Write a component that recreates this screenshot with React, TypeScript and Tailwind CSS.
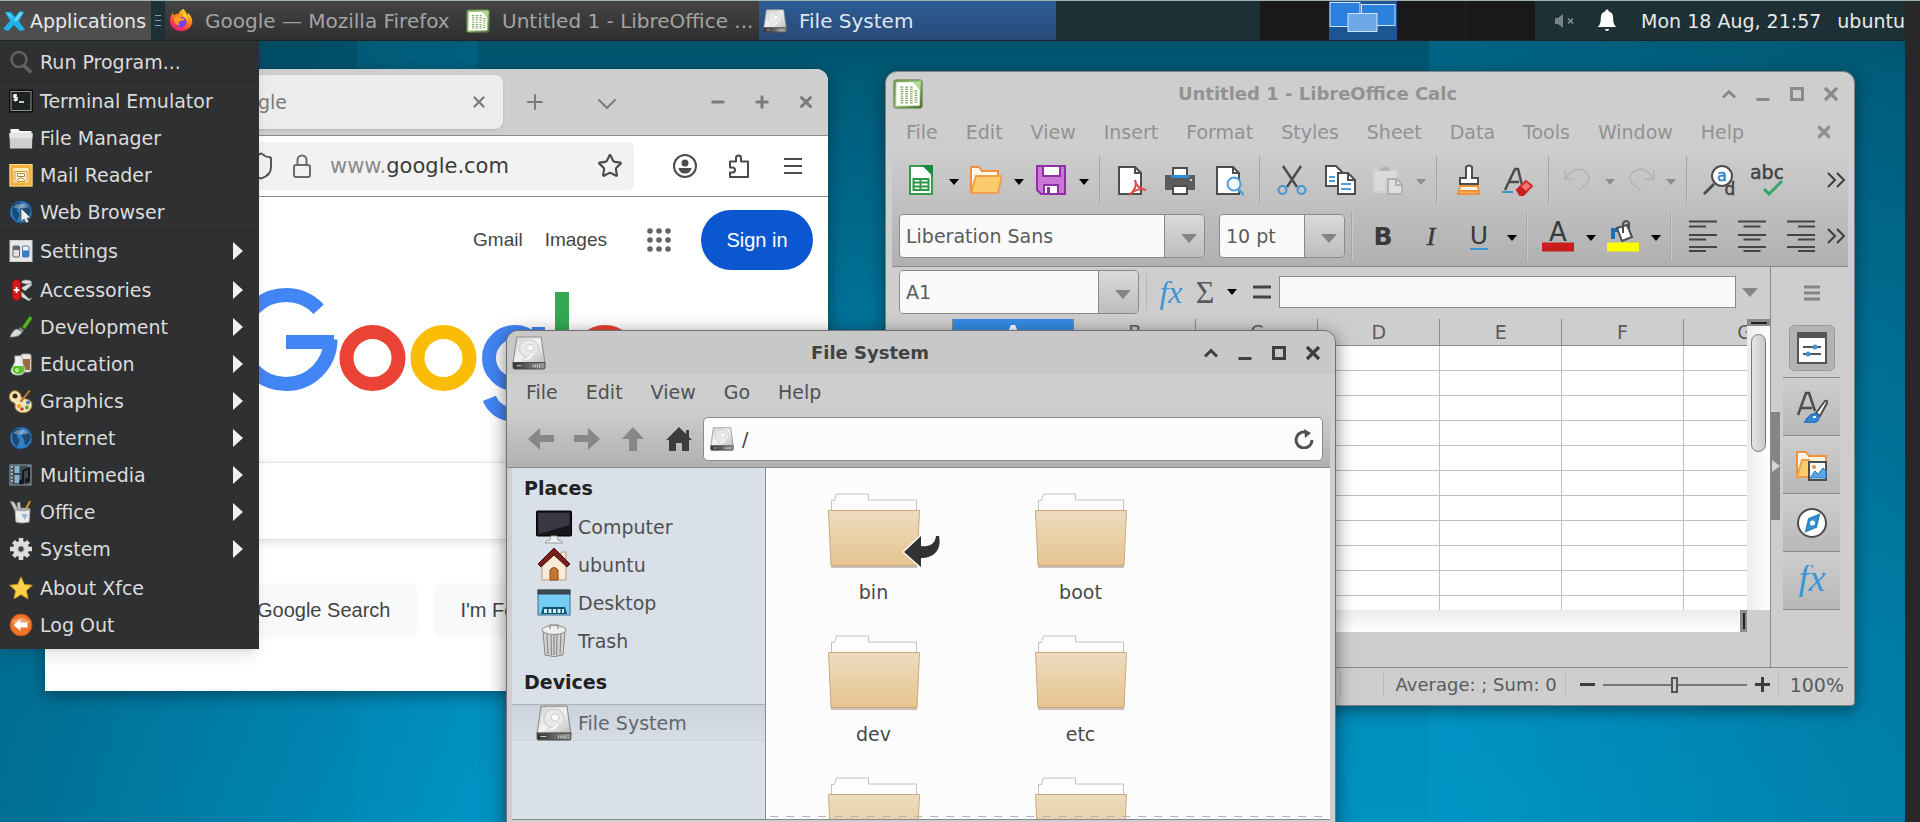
import type { ReactNode } from "react";
import { ChevronDown, Lock, Minus, Plus, Shield, Star, X } from "lucide-react";

/* ---------- small shared icons ---------- */

function DriveIcon({ className }: { className: string }) {
  return (
    <svg className={className} viewBox="0 0 32 32" aria-hidden="true">
      <defs>
        <linearGradient id="driveTop" x1="0" y1="0" x2="1" y2="1">
          <stop offset="0" stopColor="#cfcfcf" />
          <stop offset="0.5" stopColor="#f2f2f2" />
          <stop offset="1" stopColor="#bdbdbd" />
        </linearGradient>
        <linearGradient id="driveFront" x1="0" y1="0" x2="1" y2="0">
          <stop offset="0" stopColor="#2f2f2f" />
          <stop offset="1" stopColor="#9a9a9a" />
        </linearGradient>
      </defs>
      <path d="M4.500 1h23l3.500 24H1z" fill="url(#driveTop)" stroke="#8f8f8f" />
      <path d="M1 25h30v4.500q0 1.500-1.500 1.500h-27Q1 31 1 29.500z" fill="url(#driveFront)" stroke="#4d4d4d" />
      <ellipse cx="16" cy="12" rx="9" ry="8.500" fill="#e9e9e9" stroke="#cfcfcf" />
      <ellipse cx="17" cy="11" rx="3.500" ry="3" fill="#fafafa" stroke="#d0d0d0" />
      <path d="M10 21q6 0 9-6l2 1q-2 7-9 7z" fill="#f8f8f8" stroke="#cdcdcd" strokeWidth="0.600" />
      <path d="M4 28h5M20 27v2.500M22 27v2.500M24 27v2.500M26 27v2.500" stroke="#c9d4c4" strokeWidth="0.900" />
    </svg>
  );
}

function CalcIcon({ className }: { className: string }) {
  return (
    <svg className={className} viewBox="0 0 32 32" aria-hidden="true">
      <defs>
        <linearGradient id="calcFrame" x1="0" y1="0" x2="1" y2="1">
          <stop offset="0" stopColor="#7ea35c" />
          <stop offset="0.500" stopColor="#a9cf86" />
          <stop offset="1" stopColor="#43662a" />
        </linearGradient>
      </defs>
      <rect x="1" y="1" width="30" height="30" rx="2" fill="url(#calcFrame)" stroke="#567a3a" />
      <path d="M3.500 3.500h18l7 8v17h-25z" fill="#fff" />
      <path d="M21.500 3.500l7 8v-8z" fill="#b9da9b" />
      <path d="M9.500 8v18M14.500 8v18M19.500 8v18M24.500 12v14" stroke="#86ad66" strokeWidth="3" strokeDasharray="1.200 1.200" />
    </svg>
  );
}

function FirefoxIcon() {
  return (
    <svg className="size-6" viewBox="1 1 30 31" aria-hidden="true">
      <defs>
        <linearGradient id="fox" x1="0.800" y1="0" x2="0.200" y2="1">
          <stop offset="0" stopColor="#ffe226" />
          <stop offset="0.400" stopColor="#ff8a1a" />
          <stop offset="0.750" stopColor="#ff3647" />
          <stop offset="1" stopColor="#e31587" />
        </linearGradient>
      </defs>
      <path d="M19 1c3 3 4 5 5 7 1 0 1-1 1-2 4 4 6 8 5.500 13A14.500 13 0 0 1 2 19C1.500 13 3 9 6 5c0 2 0 3 1 4 2-2 4-2 6-2 1-3 3-5 6-6z" fill="url(#fox)" />
      <circle cx="16" cy="18" r="7" fill="#7a3ff2" />
      <path d="M7 12c4-3 7-1 10 1l4 1c-2 3-5 2-7 3s-1 4 1 5c-5 1-9-4-8-10z" fill="#ff9a1c" />
      <path d="M19 3c1 5 6 7 6 14-1-4-3-6-6-7z" fill="#ffdf3c" />
    </svg>
  );
}

function XfceIcon() {
  return (
    <svg className="size-6 shrink-0" viewBox="0 0 24 24" aria-hidden="true">
      <path d="M3 3l6 0 4 5 5-6 4 1-5 9 6 9-5 1-6-6-6 6-5-2 7-8z" fill="#1fb2ea" />
      <path d="M4 4l4 1 4 6 6-8 3 1-7 9" fill="#6ed4f7" />
    </svg>
  );
}

function Caret({ dim }: { dim?: boolean }) {
  return (
    <svg className={dim ? "h-[6px] w-[10px] text-[#8d8d8d]" : "h-[6px] w-[10px] text-black"} viewBox="0 0 10 6" aria-hidden="true">
      <path d="M0 0h10L5 6z" fill="currentColor" />
    </svg>
  );
}

function ComboCaret() {
  return (
    <svg className="h-[9px] w-4" viewBox="0 0 16 9" aria-hidden="true">
      <path d="M0 0h16L8 9z" fill="#858585" />
    </svg>
  );
}

/* shade, minimise, maximise, close */
function WindowButtons({ active }: { active?: boolean }) {
  return (
    <div className={active ? "flex text-[#3f3f3f]" : "flex text-[#8a8a8a]"}>
      <button type="button" aria-label="Shade" className="grid h-8 w-[34px] place-items-center">
        <svg className="size-4" viewBox="0 0 16 16" fill="none" stroke="currentColor" strokeWidth="3"><path d="M2 11.500l6-6 6 6" /></svg>
      </button>
      <button type="button" aria-label="Minimise" className="grid h-8 w-[34px] place-items-center">
        <svg className="size-4" viewBox="0 0 16 16" fill="none" stroke="currentColor" strokeWidth="3"><path d="M1.500 13.500h13" /></svg>
      </button>
      <button type="button" aria-label="Maximise" className="grid h-8 w-[34px] place-items-center">
        <svg className="size-4" viewBox="0 0 16 16" fill="none" stroke="currentColor" strokeWidth="3"><path d="M2.500 2.500h11v11h-11z" /></svg>
      </button>
      <button type="button" aria-label="Close" className="grid h-8 w-[34px] place-items-center">
        <svg className="size-4" viewBox="0 0 16 16" fill="none" stroke="currentColor" strokeWidth="3.200"><path d="M2 2l12 12M14 2L2 14" /></svg>
      </button>
    </div>
  );
}

/* ---------- applications menu ---------- */

const globe = (
  <>
    <circle cx="12" cy="12" r="11" fill="#2f7fc4" stroke="#1c4f86" />
    <path d="M4 5c4-4 8-3 9-1-2 1-1 3-4 4-2 1-1 4 1 5 1 2-1 6-2 8-4-3-6-9-4-16z" fill="#1d4a75" />
    <path d="M15 6c3-2 6 1 7 5-1 5-4 8-6 8-1-3 0-5-2-7s-1-4 1-6z" fill="#1d4a75" />
    <path d="M4 7q8-7 16 0-8 3-16 0z" fill="#fff" opacity="0.350" />
  </>
);

const icons: Record<string, ReactNode> = {
  run: (
    <g fill="none" stroke="#606264">
      <circle cx="10" cy="9.500" r="7.500" strokeWidth="2.500" />
      <path d="M15 15.500l7 7" strokeWidth="3.500" />
    </g>
  ),
  terminal: (
    <>
      <rect x="0.500" y="1" width="23" height="22" fill="#161819" stroke="#0a0a0a" />
      <rect x="2" y="2.500" width="20" height="19" fill="#1f2223" stroke="#8b8d8f" />
      <path d="M8 6H5v2.500h3V11H4.500M6.500 5v7.500M10 13h5" fill="none" stroke="#fff" strokeWidth="1.400" />
    </>
  ),
  folder: (
    <>
      <path d="M1.500 3h8l1.500 2h11.500v16h-21z" fill="#f5f5f5" />
      <path d="M0.500 7h23l-0.500 15.500H1z" fill="#cfcfcf" />
      <path d="M0.500 7h23v5H0.500z" fill="#e5e5e5" />
    </>
  ),
  mail: (
    <>
      <rect x="2.500" y="3" width="19" height="18.500" fill="#fbe9b8" stroke="#f0b23c" strokeWidth="4" />
      <rect x="1" y="1.500" width="22" height="21.500" fill="none" stroke="#fbd88a" />
      <path d="M6 8.500h12v8l-2 2H8l-2-2z" fill="#fff6dc" stroke="#c9952f" />
      <path d="M8.500 10.500h7v3h-7zM8 17l4-2.500 4 2.500" fill="#fffbe9" stroke="#a88844" />
    </>
  ),
  web: (
    <>
      {globe}
      <path d="M12 8v14l3-3 2 4 3-1-2-4h4z" fill="#eee" stroke="#333" strokeWidth="0.700" />
    </>
  ),
  settings: (
    <>
      <rect x="1" y="1.500" width="22" height="21" fill="#e8e8e8" stroke="#cfcfcf" />
      <rect x="4" y="7" width="6.500" height="11" rx="1" fill="#e0e0e0" stroke="#63676c" />
      <path d="M4 7h6.500v4H4z" fill="#63676c" />
      <rect x="13.500" y="7" width="6.500" height="11" rx="1" fill="#3a7cc8" stroke="#4d7fb8" />
      <path d="M14 7.500h5.500v4H14z" fill="#f2f2f2" />
    </>
  ),
  accessories: (
    <>
      <path d="M13 5c-2-3 5-4 9-2l1 3h-6zM12 10l9-5 2 2-7 6zM12 13l8 8 3-1-3 3-9-5z" fill="#dcdcdc" stroke="#888" strokeWidth="0.600" />
      <rect x="3" y="1.500" width="9" height="21" rx="4.500" fill="#d31a1a" stroke="#7f0d0d" />
      <path d="M7.500 9v6M4.800 12h5.400" stroke="#fff" strokeWidth="1.800" />
    </>
  ),
  development: (
    <>
      <path d="M13 12l7-10c2-1 3 0 3 2l-7 10z" fill="#54b61f" stroke="#2c6d0c" strokeWidth="0.700" />
      <path d="M11 12l4 3-2 3-4-2z" fill="#888" />
      <path d="M1 22c2-4 3-7 7-8l5 3c-2 4-6 5-12 5z" fill="#dadada" stroke="#8c8c8c" strokeWidth="0.700" />
    </>
  ),
  education: (
    <>
      <rect x="12" y="2" width="10" height="18" rx="2" fill="#eee7d8" stroke="#aaa" />
      <rect x="14" y="7" width="7" height="11" fill="#9a6a43" />
      <path d="M6 4h7v6l3 7q0 6-7 6t-7-5l4-8z" fill="#f0f0f0" stroke="#bbb" />
      <path d="M4.500 14h10q3 8-5 8t-5-8z" fill="#59c224" />
      <circle cx="8" cy="18" r="2" fill="#b6f08b" />
    </>
  ),
  graphics: (
    <>
      <path d="M1 5c3-6 10-3 11 2 0 3 4 2 8 4 5 3 3 10-2 12-6 2-12-1-12-6 1-4-2-3-4-5-2-3-2-4-1-7z" fill="#f7e3b5" stroke="#b88737" />
      <circle cx="6" cy="7" r="2.500" fill="#3a2a10" />
      <circle cx="10" cy="17" r="2" fill="#e8a12d" />
      <circle cx="19" cy="13.500" r="2" fill="#3a78c9" />
      <circle cx="13" cy="20" r="1.800" fill="#d8322c" />
      <circle cx="18" cy="18.500" r="1.900" fill="#4bae34" />
      <path d="M20 1l-9 11 1.500 1L21.500 2z" fill="#c98b35" stroke="#7b501a" strokeWidth="0.600" />
    </>
  ),
  internet: globe,
  multimedia: (
    <>
      <rect x="1" y="2" width="21" height="20" fill="#3d4a53" stroke="#8fa2ae" />
      <path d="M3 3v18M20 3v18" stroke="#c3d1da" strokeWidth="1.500" strokeDasharray="2 1.500" />
      <path d="M5.500 3h5v7h-5zM5.500 12h5v8h-5z" fill="#86b3c9" />
      <path d="M14 19V8l6-3v12" fill="none" stroke="#15191c" strokeWidth="2" />
      <circle cx="12.500" cy="19" r="2.500" fill="#15191c" />
      <circle cx="18.500" cy="17.500" r="2.500" fill="#15191c" />
    </>
  ),
  office: (
    <>
      <path d="M1 1l4 1 5 9H6zM8 3l3-1 1 9H9z" fill="#c9c9c9" stroke="#777" strokeWidth="0.600" />
      <path d="M22 1l-2 0-6 11h3z" fill="#d8a343" stroke="#7d5a1e" strokeWidth="0.600" />
      <path d="M6 9h15l-1 13q-7 2-13 0z" fill="#ececec" stroke="#aaa" />
      <ellipse cx="13.500" cy="9.500" rx="7.500" ry="1.800" fill="#a8a8a8" />
      <path d="M12 14h7l-3 6z" fill="#9db9d6" />
    </>
  ),
  system: (
    <>
      <path d="M12 1v22M1 12h22M4.500 4.500l15 15M19.500 4.500l-15 15" stroke="#dcdcdc" strokeWidth="4.500" />
      <circle cx="12" cy="12" r="8" fill="#dcdcdc" />
      <circle cx="12" cy="12" r="3" fill="#3a3c3e" stroke="#aaa" />
    </>
  ),
  about: <path d="M12 1l3.300 7.500 8 .8-6 5.400 1.700 8.100-7-4.200-7 4.200 1.700-8.100-6-5.400 8-.8z" fill="#fbd34a" stroke="#d99b1e" />,
  logout: (
    <>
      <circle cx="12" cy="12" r="11" fill="#f0742c" stroke="#b64a12" />
      <path d="M3 9q9-8 18 0-9 5-18 0z" fill="#fff" opacity="0.300" />
      <path d="M4.500 12l7-6v3.500h7v5h-7V18z" fill="#fff" />
    </>
  ),
};

const menuGroups = [
  [{ label: "Run Program...", icon: "run" }],
  [
    { label: "Terminal Emulator", icon: "terminal" },
    { label: "File Manager", icon: "folder" },
    { label: "Mail Reader", icon: "mail" },
    { label: "Web Browser", icon: "web" },
  ],
  [{ label: "Settings", icon: "settings", sub: true }],
  [
    { label: "Accessories", icon: "accessories", sub: true },
    { label: "Development", icon: "development", sub: true },
    { label: "Education", icon: "education", sub: true },
    { label: "Graphics", icon: "graphics", sub: true },
    { label: "Internet", icon: "internet", sub: true },
    { label: "Multimedia", icon: "multimedia", sub: true },
    { label: "Office", icon: "office", sub: true },
    { label: "System", icon: "system", sub: true },
  ],
  [
    { label: "About Xfce", icon: "about" },
    { label: "Log Out", icon: "logout" },
  ],
] as { label: string; icon: string; sub?: boolean }[][];

function AppMenu() {
  return (
    <nav className="absolute left-0 top-[41px] z-40 w-[259px] bg-[#2e3032] pt-[2px] pb-[6px] text-[#dcdcdc] shadow-lg">
      {menuGroups.map((group, i) => (
        <div key={i} className={i > 0 ? "border-t-2 border-[#2a2c2e]" : ""}>
          {group.map((item) => (
            <button key={item.label} type="button" className="flex h-[37px] w-full items-center gap-[7px] pl-[9px] pr-4 text-left">
              <svg className="size-6 shrink-0" viewBox="0 0 24 24" aria-hidden="true">{icons[item.icon]}</svg>
              <span className="flex-1 whitespace-nowrap">{item.label}</span>
              {item.sub && (
                <svg className="h-[18px] w-[10px]" viewBox="0 0 10 18" aria-hidden="true"><path d="M0 0l10 9-10 9z" fill="#f0f0f0" /></svg>
              )}
            </button>
          ))}
        </div>
      ))}
    </nav>
  );
}

/* ---------- top panel ---------- */

function TaskButton({ icon, title, active }: { icon: ReactNode; title: string; active?: boolean }) {
  return (
    <button
      type="button"
      className={
        active
          ? "flex w-[297px] items-center gap-3 bg-linear-to-b from-[#2c5c96] to-[#294a78] px-1 text-left text-xl text-[#dfe6ee]"
          : "flex w-[297px] items-center gap-3 bg-linear-to-b from-[#444444] to-[#303030] px-1 text-left text-xl text-[#a3a3a3]"
      }
    >
      <span className="shrink-0">{icon}</span>
      <span className="whitespace-nowrap">{title}</span>
    </button>
  );
}

function Panel() {
  return (
    <header className="relative z-50 flex h-[41px] border-t border-b border-t-[#9fb3b6] border-b-[#1b2527] bg-[#1d3036] text-[#e8e8e8]">
      <button type="button" className="flex w-[151px] items-center gap-1 bg-linear-to-b from-[#454545] to-[#505050] pl-[2px] whitespace-nowrap">
        <XfceIcon />
        Applications
      </button>
      <div className="flex w-[14px] flex-col items-center justify-center gap-1">
        <span className="h-px w-[6px] bg-[#8ba0a5]" />
        <span className="h-px w-[6px] bg-[#8ba0a5]" />
        <span className="h-px w-[6px] bg-[#8ba0a5]" />
      </div>
      <TaskButton icon={<FirefoxIcon />} title="Google — Mozilla Firefox" />
      <TaskButton icon={<CalcIcon className="size-6" />} title="Untitled 1 - LibreOffice ..." />
      <TaskButton icon={<DriveIcon className="size-6" />} title="File System" active />
      <div className="ml-auto flex w-[275px] bg-[#191919]">
        <span className="flex-1" />
        <svg className="h-full w-[68px] bg-[#1c5592]" viewBox="0 0 68 39" aria-hidden="true">
          <g stroke="#cfe3f8">
            <rect x="1" y="1.500" width="30" height="24" fill="#2b80dd" />
            <rect x="32.500" y="3.500" width="33.500" height="21" fill="#2b80dd" />
            <rect x="19" y="12.500" width="29" height="18" fill="#6ca7e6" />
          </g>
        </svg>
        <span className="flex-1" />
        <span className="flex-1 border-l border-[#222]" />
      </div>
      <div className="flex items-center pl-5">
        <svg className="h-4 w-5" viewBox="0 0 20 16" aria-hidden="true">
          <path d="M0 5h3l5-4v14l-5-4H0z" fill="#75848a" />
          <path d="M13 5.500l5 5M18 5.500l-5 5" stroke="#8b979b" strokeWidth="1.500" />
        </svg>
        <svg className="ml-[22px] h-[23px] w-5" viewBox="0 0 20 23" aria-hidden="true">
          <path d="M10 0.500c1 0 1.600.7 1.600 1.700 3 .8 4.600 3.200 4.600 6.500 0 5 .8 7.300 3.300 9.300H.5c2.500-2 3.300-4.300 3.300-9.300 0-3.300 1.600-5.700 4.600-6.500C8.400 1.200 9 .5 10 .5zM8 20h4q0 2-2 2t-2-2z" fill="#fff" />
        </svg>
        <time className="ml-6 whitespace-nowrap">Mon 18 Aug, 21:57</time>
        <span className="ml-4">ubuntu</span>
      </div>
    </header>
  );
}

/* ---------- firefox ---------- */

function GoogleLogo() {
  // arcs are dashed circles, bars are plain rects
  return (
    <svg className="block h-[150px] w-[432px] shrink-0" viewBox="0 0 432 150" role="img" aria-label="Google" fill="none">
      <circle cx="56" cy="58.500" r="44.500" stroke="#4285f4" strokeWidth="14" strokeDasharray="246 34" />
      <rect x="62" y="46" width="54" height="8" fill="#fff" />
      <rect x="56" y="54" width="48" height="14" fill="#4285f4" />
      <circle cx="142.500" cy="77" r="26" stroke="#ea4335" strokeWidth="14" />
      <circle cx="213.500" cy="77" r="26" stroke="#fbbc05" strokeWidth="14" />
      <circle cx="285" cy="77" r="26" stroke="#4285f4" strokeWidth="14" />
      <rect x="302" y="46" width="13" height="64" fill="#4285f4" />
      <circle cx="283" cy="108" r="25.500" stroke="#4285f4" strokeWidth="14" strokeDasharray="70 91" />
      <rect x="325" y="11" width="14" height="97" fill="#34a853" />
      <circle cx="375" cy="77" r="26" stroke="#ea4335" strokeWidth="14" />
    </svg>
  );
}

function FirefoxWindow() {
  return (
    <section className="absolute left-[45px] top-[69px] z-10 flex h-[622px] w-[783px] flex-col overflow-hidden rounded-t-xl bg-white shadow-[0_4px_16px_rgba(0,0,0,0.4)]">
      <div className="flex h-[67px] shrink-0 items-center border-b border-[#8b8b8b] bg-[#cecece] text-[#7b7b7b]">
        <div className="ml-[123px] flex h-[54px] w-[335px] items-center justify-between rounded-lg bg-[#ececec] pl-[52px] pr-3 shadow-sm">
          <span>Google</span>
          <button type="button" aria-label="Close tab" className="grid size-6 place-items-center"><X className="size-[18px]" strokeWidth={3} /></button>
        </div>
        <button type="button" aria-label="New tab" className="ml-5 grid size-6 place-items-center"><Plus className="size-6" strokeWidth={2} /></button>
        <button type="button" aria-label="List tabs" className="ml-11 grid size-7 place-items-center"><ChevronDown className="size-8 shrink-0" strokeWidth={1.5} /></button>
        <div className="ml-auto flex">
          <button type="button" aria-label="Minimise" className="grid w-11 place-items-center"><Minus className="size-[18px]" strokeWidth={4} /></button>
          <button type="button" aria-label="Maximise" className="grid w-11 place-items-center"><Plus className="size-[18px]" strokeWidth={4} /></button>
          <button type="button" aria-label="Close" className="grid w-11 place-items-center"><X className="size-[18px]" strokeWidth={4} /></button>
        </div>
      </div>
      <div className="flex h-[61px] shrink-0 items-center border-b border-[#8b8b8b] text-[#4b4b4b]">
        <div className="ml-[185px] flex h-12 w-[404px] items-center rounded-md bg-[#f2f2f2] pl-4 pr-[11px]">
          <Shield className="size-[30px] shrink-0" strokeWidth={1.5} />
          <svg className="ml-4 h-6 w-5 shrink-0 text-[#6b6b6b]" viewBox="0 0 20 24" fill="none" stroke="currentColor" strokeWidth="2" aria-hidden="true">
            <rect x="2" y="11" width="16" height="12" rx="2" />
            <path d="M5.500 11V6a4.500 4.500 0 0 1 9 0v5" />
          </svg>
          <span className="ml-[18px] flex-1 text-[21px] text-[#8b8b8b]">www.<span className="text-[#3b3b3b]">google.com</span></span>
          <Star className="size-[26px] shrink-0" strokeWidth={2} />
        </div>
        <div className="ml-6 flex">
          <button type="button" aria-label="Account" className="grid w-[54px] place-items-center">
            <svg className="size-6" viewBox="0 0 24 24" aria-hidden="true">
              <circle cx="12" cy="12" r="11" fill="none" stroke="currentColor" strokeWidth="2" />
              <circle cx="12" cy="9" r="3.500" fill="currentColor" />
              <path d="M5.500 14h13q-1 5.500-6.500 5.500T5.500 14z" fill="currentColor" />
            </svg>
          </button>
          <button type="button" aria-label="Extensions" className="grid w-[54px] place-items-center">
            <svg className="size-6" viewBox="0 0 24 24" fill="none" stroke="currentColor" strokeWidth="2" aria-hidden="true">
              <path d="M3 7.500h6V4a2.500 2.500 0 0 1 5 0v3.500h7V23H3v-4.500h2.500a2.500 2.500 0 0 0 0-5H3z" strokeLinejoin="round" />
            </svg>
          </button>
          <button type="button" aria-label="Menu" className="grid w-[54px] place-items-center">
            <svg className="size-5" viewBox="0 0 20 20" stroke="currentColor" strokeWidth="2" aria-hidden="true"><path d="M1 3h18M1 10h18M1 17h18" /></svg>
          </button>
        </div>
      </div>
      <div className="flex flex-1 flex-col items-center font-['Liberation_Sans',sans-serif] text-[#444]">
        <div className="mt-[13px] flex w-full items-center justify-end pr-[15px]">
          <a href="#gmail">Gmail</a>
          <a href="#images" className="ml-[22px]">Images</a>
          <svg className="ml-10 size-6" viewBox="0 0 24 24" fill="#5f6368" aria-label="Apps">
            {[3, 12, 21].map((y) => [3, 12, 21].map((x) => <circle key={`${x}-${y}`} cx={x} cy={y} r="2.800" />))}
          </svg>
          <a href="#signin" className="ml-[30px] flex h-15 w-28 items-center justify-center rounded-full bg-[#0b57d0] text-xl text-white">Sign in</a>
        </div>
        <div className="mt-[11px] w-full pl-[185px]">
          <GoogleLogo />
        </div>
        <input aria-label="Search" className="mt-[31px] h-[78px] w-[700px] rounded-full border border-[#dfe1e5] shadow-[0_2px_8px_rgba(0,0,0,0.12)] outline-none" />
        <div className="mt-[43px] flex w-full gap-4 pl-[185px] text-xl">
          <button type="button" className="h-[54px] rounded-lg bg-[#f8f9fa] px-[27px]">Google Search</button>
          <button type="button" className="h-[54px] rounded-lg bg-[#f8f9fa] px-[27px]">I'm Feeling Lucky</button>
        </div>
      </div>
    </section>
  );
}

/* ---------- libreoffice calc ---------- */

function Tool({ label, narrow, children }: { label: string; narrow?: boolean; children: ReactNode }) {
  return (
    <button type="button" aria-label={label} className={narrow ? "grid w-11 place-items-center" : "grid w-12 place-items-center"}>
      <svg className="size-8" viewBox="0 0 32 32" fill="none" stroke="#4d4d4d" strokeWidth="2" aria-hidden="true">{children}</svg>
    </button>
  );
}

function Drop({ dim }: { dim?: boolean }) {
  return (
    <button type="button" aria-label="More options" className="grid w-[17px] place-items-center pt-1">
      <Caret dim={dim} />
    </button>
  );
}

function Sep({ tight }: { tight?: boolean }) {
  return (
    <span
      className={
        tight
          ? "mx-[6px] w-[2px] self-stretch border-l border-[#a6a6a6] bg-[#c9c9c9]"
          : "mx-[7px] w-[2px] self-stretch border-l border-[#a6a6a6] bg-[#c9c9c9]"
      }
    />
  );
}

function Overflow() {
  return (
    <button type="button" aria-label="More" className="ml-auto mr-[2px]">
      <svg className="size-5" viewBox="0 0 20 20" fill="none" stroke="#3d3d3d" strokeWidth="2" aria-hidden="true"><path d="M2 3l7 7-7 7M11 3l7 7-7 7" /></svg>
    </button>
  );
}

function AlignTool({ label, d }: { label: string; d: string }) {
  return (
    <button type="button" aria-label={label} className="grid w-[49px] place-items-center">
      <svg className="h-8 w-[28px]" viewBox="0 0 28 32" stroke="#444" strokeWidth="2" aria-hidden="true"><path d={d} /></svg>
    </button>
  );
}

function Combo({ label, value, className }: { label: string; value: string; className: string }) {
  return (
    <div className={className}>
      <input aria-label={label} defaultValue={value} className="h-full w-0 flex-1 bg-[#fafafa] px-[6px] outline-none" />
      <button type="button" aria-label={`${label} list`} className="grid h-full w-10 place-items-center border-l border-[#8a8a8a] bg-linear-to-b from-[#dadada] to-[#bdbdbd] pt-1 pl-2">
        <ComboCaret />
      </button>
    </div>
  );
}

const calcMenus = ["File", "Edit", "View", "Insert", "Format", "Styles", "Sheet", "Data", "Tools", "Window", "Help"];
const columns = ["A", "B", "C", "D", "E", "F", "G"];
const rows = [1, 2, 3, 4, 5, 6, 7, 8, 9, 10, 11];

function CalcToolbar() {
  return (
    <div className="flex h-16 items-center py-2 pl-[5px]">
      <Tool label="New">
        <path d="M5 2h15l7 7v21H5z" fill="#fff" stroke="#3a9a50" />
        <path d="M19 2h8v8z" fill="#1d8a38" stroke="#1d8a38" />
        <path d="M8.500 15h15v11h-15zM8.500 18.500h15M8.500 22.500h15M15.500 15v11" stroke="#2f9648" />
      </Tool>
      <Drop />
      <Tool label="Open">
        <path d="M1 29V3h8l3 4h16v5" fill="#fff7ea" stroke="#ee9040" />
        <path d="M6 12h26l-4 17H1z" fill="#fbcb6c" stroke="#ee9f4c" />
      </Tool>
      <Drop />
      <Tool label="Save">
        <path d="M2 2h28v28H6l-4-4z" fill="#cb77d8" stroke="#8f2fa3" />
        <path d="M8 2h17v10H8zM9 21h14v9H9z" fill="#fff" stroke="#8f2fa3" />
        <path d="M13.500 23v7" stroke="#8f2fa3" strokeWidth="3" />
      </Tool>
      <Drop />
      <Sep />
      <Tool label="Export as PDF">
        <path d="M3 3h16l6 6v21H3z" fill="#fff" />
        <path d="M19 3v6h6" />
        <path d="M13 31c6-4 8-10 6-15 1 6 4 9 11 10-6-2-12 0-17 5z" fill="#fff" stroke="#dd4b4b" />
      </Tool>
      <Tool label="Print">
        <path d="M9 14V4h14v10" fill="#fff" />
        <path d="M1 11h30v15H1z" fill="#5b5b5b" stroke="none" />
        <path d="M7 11h18v3H7z" fill="#2d8fd5" stroke="none" />
        <path d="M9 22h14v8H9z" fill="#fff" />
        <path d="M26 16h2" stroke="#cfcfcf" />
      </Tool>
      <Tool label="Print Preview">
        <path d="M5 3h16l6 6v21H5z" fill="#fff" />
        <path d="M21 3v6h6" />
        <circle cx="22" cy="20" r="6.500" fill="#eef6fc" stroke="#4a9fd8" />
        <path d="M26 25l6 6" stroke="#4a9fd8" strokeWidth="2.500" />
      </Tool>
      <Sep />
      <Tool label="Cut">
        <path d="M7 2l14 21M25 2L11 23" strokeWidth="2.500" />
        <circle cx="6.500" cy="26" r="4" stroke="#4195d1" />
        <circle cx="25.500" cy="26" r="4" stroke="#4195d1" />
      </Tool>
      <Tool label="Copy">
        <path d="M2 2h10l6 6v14H2z" fill="#fff" />
        <path d="M14 9h10l7 7v14H14z" fill="#fff" />
        <path d="M24 9v7h6" />
        <path d="M5 13h6M5 17h6M17 20h10M17 25h10" stroke="#4a9fd8" />
      </Tool>
      <Tool label="Paste">
        <path d="M2 6h23v9H14v13H2z" fill="#dadada" />
        <path d="M2 6h23v9H14v13H2z" fill="#dadada" stroke="#d0d0d0" />
        <path d="M7 7q6-9 12 0z" fill="#b2b2b2" stroke="none" />
        <path d="M16 15h9l5 5v10H16z" fill="#dedede" stroke="#b2b2b2" />
        <path d="M24 15v6h6" stroke="#b2b2b2" />
      </Tool>
      <Drop dim />
      <Sep />
      <Tool label="Clone Formatting">
        <path d="M13 14V3q3-3 6 0v11h6v6H7v-6z" fill="#fff" />
        <path d="M7 22h18l1 8H5z" fill="#fff3df" stroke="#ee9540" />
        <path d="M6 27h20v3H6z" fill="#fbb25c" stroke="#ee9540" />
      </Tool>
      <Tool label="Clear Formatting">
        <path d="M4 26L14 5h3l4 16M8 18h10" strokeWidth="2.500" />
        <path d="M1 28h11" stroke="#3e95d4" />
        <path d="M16 26l9-9 6 5-9 9z" fill="#ee7777" stroke="#d42f2f" />
        <path d="M16 26l3-3 6 5-3 3h-3z" fill="#cc1f1f" stroke="#cc1f1f" />
      </Tool>
      <Sep />
      <Tool label="Undo" narrow>
        <path d="M2 6v9h9M3 14q7-11 17-8 10 6 4 13l-8 7" stroke="#b3b3b3" strokeWidth="1.500" />
      </Tool>
      <Drop dim />
      <Tool label="Redo" narrow>
        <path d="M30 6v9h-9M29 14Q22 3 12 6q-10 6-4 13l8 7" stroke="#b3b3b3" strokeWidth="1.500" />
      </Tool>
      <Drop dim />
      <Sep />
      <Tool label="Find and Replace">
        <path d="M11 20L1 30" strokeWidth="3" />
        <circle cx="19" cy="12" r="10" fill="#fff" />
        <text x="19" y="17" textAnchor="middle" fontSize="16" fill="#2e86c8" stroke="#2e86c8" strokeWidth="0.500">a</text>
        <text x="27" y="31" textAnchor="middle" fontSize="17" fill="#444" stroke="#444" strokeWidth="0.500">d</text>
      </Tool>
      <Tool label="Spelling">
        <text x="16" y="15" textAnchor="middle" fontSize="19" fill="#444" stroke="#444" strokeWidth="0.500">abc</text>
        <path d="M13 25l5 5L31 17" stroke="#34a66a" strokeWidth="3" />
      </Tool>
      <Overflow />
    </div>
  );
}

function FormatToolbar() {
  return (
    <div className="flex h-[55px] items-center border-b border-[#8a8a8a] pb-[6px] pl-[7px]">
      <Combo label="Font name" value="Liberation Sans" className="flex h-[44px] w-[306px] overflow-hidden rounded-[5px] border border-[#8a8a8a]" />
      <Combo label="Font size" value="10 pt" className="ml-[14px] flex h-[44px] w-[126px] overflow-hidden rounded-[5px] border border-[#8a8a8a]" />
      <Sep tight />
      <Tool label="Bold"><text x="16" y="25" textAnchor="middle" fontSize="25" fontWeight="bold" fill="#3a3a3a" stroke="none">B</text></Tool>
      <Tool label="Italic"><text x="16" y="25" textAnchor="middle" fontSize="26" fontStyle="italic" fontFamily="Liberation Serif" fill="#3a3a3a" stroke="#3a3a3a" strokeWidth="0.500">I</text></Tool>
      <Tool label="Underline">
        <text x="16" y="24" textAnchor="middle" fontSize="25" fill="#3a3a3a" stroke="none">U</text>
        <path d="M7 29h18" stroke="#3e95d4" />
      </Tool>
      <Drop />
      <Sep tight />
      <Tool label="Font colour">
        <text x="16" y="21" textAnchor="middle" fontSize="26" fill="#3a3a3a" stroke="none">A</text>
        <path d="M0 27h32" stroke="#c81e1e" strokeWidth="9" />
      </Tool>
      <Drop />
      <Tool label="Highlight colour">
        <path d="M4 19V8h8v4H8v7z" fill="#1f6fb5" stroke="none" />
        <path d="M10 8l10-3 5 12-10 4z" fill="#fff" />
        <path d="M16 13V3q4-4 6 0v7" />
        <path d="M0 27h32" stroke="#fdfd00" strokeWidth="9" />
      </Tool>
      <Drop />
      <Sep tight />
      <AlignTool label="Align left" d="M0 1.500h28M0 6.500h17M0 15h28M0 19.500h17M0 27h28M0 31h17" />
      <AlignTool label="Centre" d="M0 1.500h28M5.500 6.500h17M0 15h28M5.500 19.500h17M0 27h28M5.500 31h17" />
      <AlignTool label="Align right" d="M0 1.500h28M11 6.500h17M0 15h28M11 19.500h17M0 27h28M11 31h17" />
      <Overflow />
    </div>
  );
}

function Sheet() {
  return (
    <div className="flex h-[291px]">
      <div className="w-0 flex-1 overflow-hidden bg-white">
        <table className="w-[914px] table-fixed border-collapse">
          <thead>
            <tr className="h-[26px] bg-[#cecece] text-[#5b5b5b]">
              <th className="w-[60px] border-r border-b border-[#8a8a8a]" />
              {columns.map((c) => (
                <th
                  key={c}
                  className={
                    c === "A"
                      ? "border-r border-b border-[#8a8a8a] bg-[#368be6] p-0 leading-6 font-bold text-white"
                      : "border-r border-b border-[#8a8a8a] p-0 leading-6 font-normal"
                  }
                >
                  {c}
                </th>
              ))}
            </tr>
          </thead>
          <tbody>
            {rows.map((r) => (
              <tr key={r} className="h-[25px]">
                <th className="border-r border-b border-[#b5b5b5] bg-[#cecece] p-0 text-base leading-6 font-normal">{r}</th>
                {columns.map((c) => (
                  <td key={c} className="border-r border-b border-[#c0c0c0] p-0" />
                ))}
              </tr>
            ))}
          </tbody>
        </table>
      </div>
      <div className="flex w-[23px] flex-col bg-linear-to-r from-[#ececec] to-white">
        <span className="grid h-[7px] place-items-center bg-[#8b8b8b]"><span className="h-[2px] w-4 bg-[#222]" /></span>
        <span className="mx-1 mt-2 h-[118px] rounded-full border border-[#777] bg-linear-to-r from-[#e4e4e4] to-[#c9c9c9]" />
      </div>
    </div>
  );
}

function SideTool({ label, children }: { label: string; children: ReactNode }) {
  return (
    <button type="button" aria-label={label} className="grid h-[58px] place-items-center border-b border-[#8a8a8a] bg-linear-to-b from-[#cecece] to-[#b8b8b8]">
      <svg className="size-8" viewBox="0 0 32 32" fill="none" stroke="#4d4d4d" strokeWidth="2" aria-hidden="true">{children}</svg>
    </button>
  );
}

function CalcWindow() {
  return (
    <section className="absolute left-[885px] top-[71px] z-10 w-[970px] rounded-t-xl rounded-b-sm border border-[#7c8486] bg-[#cecece] px-[6px] pb-1 text-[#929292] shadow-[0_4px_16px_rgba(0,0,0,0.45)]">
      <div className="flex h-11 items-center">
        <CalcIcon className="ml-px size-[30px]" />
        <h2 className="flex-1 text-center text-lg font-bold whitespace-nowrap">Untitled 1 - LibreOffice Calc</h2>
        <WindowButtons />
      </div>
      <nav className="flex h-8 items-center gap-7 pl-[14px]">
        {calcMenus.map((m) => <button key={m} type="button">{m}</button>)}
        <button type="button" aria-label="Close document" className="ml-auto mr-[15px]"><X className="size-[18px]" strokeWidth={5} /></button>
      </nav>
      <div className="bg-linear-to-b from-[#cecece] to-[#b0b0b0] text-[#5b5b5b]">
        <CalcToolbar />
        <FormatToolbar />
      </div>
      <div className="flex text-[#5b5b5b]">
        <div className="w-0 flex-1">
          <div className="flex h-[52px] items-center pb-[2px] pl-[7px]">
            <Combo label="Name box" value="A1" className="flex h-[44px] w-[240px] overflow-hidden rounded-[5px] border border-[#8a8a8a]" />
            <span className="ml-[7px] h-9 w-px bg-[#b4b4b4]" />
            <button type="button" aria-label="Function wizard" className="ml-3 w-6 font-['Liberation_Serif',serif] text-[32px] leading-7 text-[#3e95d4] italic">fx</button>
            <button type="button" aria-label="Select function" className="ml-3 w-5 font-['Liberation_Serif',serif] text-[32px] leading-7">Σ</button>
            <button type="button" aria-label="More functions" className="ml-3"><Caret /></button>
            <button type="button" aria-label="Formula" className="ml-4"><svg className="h-[14px] w-[18px]" viewBox="0 0 18 14" aria-hidden="true"><path d="M0 2h18M0 12h18" stroke="#444" strokeWidth="3" /></svg></button>
            <input aria-label="Formula input" className="ml-2 h-8 w-0 flex-1 border border-[#8a8a8a] bg-[#fafafa] px-1 outline-none" />
            <button type="button" aria-label="Expand formula bar" className="mr-3 ml-[6px]"><ComboCaret /></button>
          </div>
          <Sheet />
          <div className="mr-[23px] flex h-[22px] justify-end bg-linear-to-b from-[#ececec] to-white">
            <span className="grid w-[7px] place-items-center bg-[#8b8b8b]"><span className="h-4 w-[2px] bg-[#222]" /></span>
          </div>
          <div className="h-[35px]" />
        </div>
        <div className="flex w-[78px] border-l border-[#8a8a8a]">
          <button type="button" aria-label="Hide sidebar" className="mt-[145px] grid h-[108px] w-[9px] place-items-center bg-[#858585]">
            <svg className="h-3 w-2" viewBox="0 0 8 12" aria-hidden="true"><path d="M0 0l8 6-8 6z" fill="#d4d4d4" /></svg>
          </button>
          <div className="ml-[3px] flex w-[57px] flex-col">
            <button type="button" aria-label="Sidebar settings" className="grid h-[51px] place-items-center">
              <svg className="size-4" viewBox="0 0 16 16" stroke="#858585" strokeWidth="3" aria-hidden="true"><path d="M0 2h16M0 8h16M0 14h16" /></svg>
            </button>
            <button type="button" aria-label="Properties" className="grid h-[60px] place-items-center border-b border-[#8a8a8a]">
              <span className="grid size-[46px] place-items-center rounded-md border border-[#999] bg-[#b3b3b3]">
                <svg className="size-8" viewBox="0 0 32 32" fill="none" stroke="#555" strokeWidth="2" aria-hidden="true">
                  <path d="M2 1h28v30H2z" fill="#fff" />
                  <path d="M2 3.500h28" strokeWidth="5" />
                  <path d="M7 15h18M7 22h18" />
                  <circle cx="19" cy="15" r="2.500" fill="#3e95d4" stroke="none" />
                  <circle cx="12" cy="22" r="2.500" fill="#3e95d4" stroke="none" />
                </svg>
              </span>
            </button>
            <SideTool label="Styles">
              <path d="M2 24L10 2h3l6 18M5 17h11" strokeWidth="2.500" />
              <path d="M20 22L29 10q3-1 2 2l-7 13z" fill="#fff" />
              <path d="M9 31q5-9 11-8 5 3 1 7-5 3-12 1z" fill="#3a8bd6" stroke="#2c78bf" />
              <path d="M17 26h3" stroke="#fff" />
            </SideTool>
            <SideTool label="Gallery">
              <path d="M1 28V3h9l3 4h17v6" fill="#fff3df" stroke="#ee9040" />
              <path d="M6 11h7v17H1z" fill="#fbcb6c" stroke="#ee9f4c" />
              <path d="M13 13h17v18H13z" fill="#fff" />
              <circle cx="18" cy="18" r="2" fill="#ee9040" stroke="none" />
              <path d="M14 29l5-7 3 3 5-6 3 3v7z" fill="#5aa5e6" stroke="#2c78bf" strokeWidth="1" />
            </SideTool>
            <SideTool label="Navigator">
              <circle cx="16" cy="16" r="14" fill="#fff" />
              <path d="M23 8l-3 12-10 4 3-12z" fill="#3a93d4" stroke="#2c83c4" />
              <circle cx="16.500" cy="16" r="2.500" fill="#fff" stroke="none" />
            </SideTool>
            <SideTool label="Functions">
              <text x="16" y="26" textAnchor="middle" fontSize="38" fontStyle="italic" fontFamily="Liberation Serif" fill="#3e95d4" stroke="none">fx</text>
            </SideTool>
          </div>
        </div>
      </div>
      <footer className="flex h-[34px] items-center justify-end border-t border-[#8a8a8a] text-[#5b5b5b]">
        <span className="h-6 w-px bg-[#b8b8b8]" />
        <span className="ml-[42px] h-6 w-px bg-[#b8b8b8]" />
        <span className="ml-3 text-lg whitespace-nowrap">Average: ; Sum: 0</span>
        <span className="ml-2 h-6 w-px bg-[#b8b8b8]" />
        <button type="button" aria-label="Zoom out" className="ml-[14px] h-[3px] w-[15px] bg-[#3d3d3d]" />
        <input
          type="range"
          aria-label="Zoom"
          defaultValue={50}
          className="mx-2 h-[2px] w-36 appearance-none bg-[#777] [&::-webkit-slider-thumb]:h-4 [&::-webkit-slider-thumb]:w-[7px] [&::-webkit-slider-thumb]:appearance-none [&::-webkit-slider-thumb]:border-2 [&::-webkit-slider-thumb]:border-[#555] [&::-webkit-slider-thumb]:bg-[#cecece]"
        />
        <button type="button" aria-label="Zoom in"><svg className="size-[15px]" viewBox="0 0 15 15" aria-hidden="true"><path d="M7.500 0v15M0 7.500h15" stroke="#3d3d3d" strokeWidth="3" /></svg></button>
        <span className="ml-2 h-6 w-px bg-[#b8b8b8]" />
        <span className="mr-1 ml-[11px]">100%</span>
      </footer>
    </section>
  );
}

/* ---------- file manager ---------- */

const places = [
  {
    label: "Computer",
    icon: (
      <>
        <rect x="0.500" y="2" width="35" height="25" rx="1" fill="#17171c" stroke="#000" />
        <path d="M2.500 4h31v12L2.500 25z" fill="#3b3845" />
        <path d="M15 27h6l1 4q4 0 5 3H9q1-3 5-3z" fill="#f2f2f2" stroke="#999" />
      </>
    ),
  },
  {
    label: "ubuntu",
    icon: (
      <>
        <path d="M6 16L18 6l12 10v17H6z" fill="#f8ead9" stroke="#b9997c" />
        <path d="M25 5h5v8l-5-5z" fill="#f2e6da" stroke="#b9997c" />
        <path d="M18 1L2 17l3 3L18 8l13 12 3-3z" fill="#7b1f1c" stroke="#4c0f0e" />
        <path d="M14 33V23q4-5 8 0v10z" fill="#c7762f" stroke="#8a4b16" />
      </>
    ),
  },
  {
    label: "Desktop",
    icon: (
      <>
        <rect x="2" y="5" width="32" height="25" fill="#74cdf2" stroke="#3a6f8c" />
        <rect x="1.500" y="4.500" width="33" height="5" fill="#3a4650" />
        <path d="M5 29l2-7h22l2 7z" fill="#15506e" />
        <path d="M8 26h20" stroke="#cdeefc" strokeWidth="4" strokeDasharray="3 1.500" />
      </>
    ),
  },
  {
    label: "Trash",
    icon: (
      <>
        <path d="M7 8h22l-2 24q-9 3-18 0z" fill="#d4d4d4" stroke="#858585" />
        <path d="M11 11l1 20M15 12l.5 20M18 12v20M21 12l-.5 20M25 11l-1 20" stroke="#8f8f8f" strokeWidth="1.300" />
        <ellipse cx="18" cy="7" rx="12" ry="4.500" fill="#ededed" stroke="#8b8b8b" />
        <path d="M14 6V2h8v4" fill="none" stroke="#9d9d9d" strokeWidth="1.500" />
      </>
    ),
  },
];

// unnamed entries sit below the fold of the pane
const folders = [
  { name: "bin", link: true },
  { name: "boot" },
  { name: "dev" },
  { name: "etc" },
  { name: "" },
  { name: "" },
] as { name: string; link?: boolean }[];

function Folder({ name, link }: { name: string; link?: boolean }) {
  return (
    <button type="button" className="flex h-[142px] w-[207px] flex-col items-center">
      <span className="relative">
        <svg className="h-[76px] w-[94px]" viewBox="0 0 94 76" aria-hidden="true">
          <defs>
            <linearGradient id="folderFront" x1="0" y1="0" x2="0" y2="1">
              <stop offset="0" stopColor="#eddcc0" />
              <stop offset="1" stopColor="#e6c48f" />
            </linearGradient>
          </defs>
          <path d="M4.500 20V8.500h3l2-6.500h32v6h48v12z" fill="#fdfdfd" stroke="#c2c2c2" />
          <path d="M4 75h86" stroke="#c9c1b5" strokeWidth="2" />
          <path d="M1.500 18.500h91l-2.500 55H4z" fill="url(#folderFront)" stroke="#c9ab7c" strokeLinejoin="round" />
        </svg>
        {link && (
          <svg className="absolute -right-[21px] -bottom-[3px] h-9 w-10" viewBox="0 0 40 36" aria-label="link">
            <path d="M2 17L19 1v10c9 1 14-2 15-10h3c3 14-5 22-18 22v9z" fill="#303234" stroke="#fff" strokeWidth="2.500" strokeLinejoin="round" paintOrder="stroke" />
          </svg>
        )}
      </span>
      <span className="mt-3 leading-6">{name}</span>
    </button>
  );
}

function FileWindow() {
  return (
    <section className="absolute left-[506px] top-[330px] z-20 w-[830px] rounded-t-xl border border-[#707070] bg-[#cecece] px-[5px] text-[#505050] shadow-[0_4px_18px_rgba(0,0,0,0.5)]">
      <div className="-mx-[5px] flex h-[43px] items-center rounded-t-xl bg-[#c8c8c8] px-[5px]">
        <DriveIcon className="size-[34px]" />
        <h1 className="flex-1 text-center text-lg font-bold text-[#424242]">File System</h1>
        <WindowButtons active />
      </div>
      <nav className="flex h-9 items-center gap-7 pl-[14px]">
        {["File", "Edit", "View", "Go", "Help"].map((m) => <button key={m} type="button">{m}</button>)}
      </nav>
      <div className="-ml-[5px] flex h-[58px] items-center border-b border-[#8a8a8a] bg-linear-to-b from-[#cecece] to-[#b0b0b0] pr-[7px] pl-[11px] text-[#878787]">
        <button type="button" aria-label="Back" className="grid w-[46px] place-items-center">
          <svg className="h-6 w-7" viewBox="0 0 28 24" aria-hidden="true"><path d="M1 12L13 1v7h14v7H13v8z" fill="currentColor" /></svg>
        </button>
        <button type="button" aria-label="Forward" className="grid w-[46px] place-items-center">
          <svg className="h-6 w-7" viewBox="0 0 28 24" aria-hidden="true"><path d="M27 12L15 1v7H1v7h14v8z" fill="currentColor" /></svg>
        </button>
        <button type="button" aria-label="Up" className="grid w-[46px] place-items-center">
          <svg className="size-6" viewBox="0 0 24 24" aria-hidden="true"><path d="M12 0L1 12h7v12h8V12h7z" fill="currentColor" /></svg>
        </button>
        <button type="button" aria-label="Home" className="grid w-[46px] place-items-center text-[#3d3d3d]">
          <svg className="h-6 w-[26px]" viewBox="0 0 26 24" aria-hidden="true"><path d="M13 0l7 7V3h3v7l3 3h-3v11h-7v-8h-6v8H3V13H0z" fill="currentColor" /></svg>
        </button>
        <div className="ml-px flex h-[44px] flex-1 items-center rounded-[5px] border border-[#8a8a8a] bg-[#fcfcfc] pr-2 pl-[6px]">
          <DriveIcon className="size-6" />
          <input aria-label="Location" defaultValue="/" className="w-0 flex-1 px-2 text-[#3d3d3d] outline-none" />
          <button type="button" aria-label="Reload">
            <svg className="size-5" viewBox="0 0 20 20" fill="none" aria-hidden="true">
              <path d="M18 11a8 8 0 1 1-7-8" stroke="#505050" strokeWidth="3" />
              <path d="M10 0l7 4-6 5z" fill="#505050" />
            </svg>
          </button>
        </div>
      </div>
      <div className="flex h-[351px]">
        <aside className="w-[254px] shrink-0 border-r border-[#8a8a8a] bg-[#dae0e7]">
          <h3 className="flex h-10 items-center pl-3 font-bold text-[#202224]">Places</h3>
          {places.map((p) => (
            <a key={p.label} href={`#${p.label}`} className="flex h-[38px] items-center gap-[6px] pl-6">
              <svg className="size-9" viewBox="0 0 36 36" aria-hidden="true">{p.icon}</svg>
              {p.label}
            </a>
          ))}
          <h3 className="flex h-11 items-center pl-3 font-bold text-[#202224]">Devices</h3>
          <a href="#root" className="flex h-[37px] items-center gap-[6px] border-t border-b border-t-[#a9b0b8] border-b-[#cdd3da] bg-linear-to-b from-[#ccd3dc] to-[#d6dde5] pl-6 text-[#62676c]">
            <DriveIcon className="size-9" />
            File System
          </a>
        </aside>
        <div className="relative grid flex-1 auto-rows-min grid-cols-[207px_207px] overflow-hidden bg-[#fcfcfc] pt-6 pl-1 text-[#484848]">
          {folders.map((f, i) => <Folder key={i} {...f} />)}
          <div className="absolute inset-x-1 bottom-[2px] h-px bg-[repeating-linear-gradient(to_right,#b4b4b4_0_8px,transparent_8px_16px)]" />
        </div>
      </div>
      <footer className="h-8 border-t border-[#8a8a8a]" />
    </section>
  );
}

export default function App() {
  return (
    <div className="flex h-screen overflow-hidden font-['DejaVu_Sans',sans-serif] text-[19px] leading-7">
      <main className="relative flex-1 overflow-hidden bg-[linear-gradient(to_bottom,#00485e_0,#005c79_10%,#007299_40%,#008cbb_80%,#0092c1_100%)]">
        <div className="absolute inset-y-0 left-[357px] w-[120px] bg-[#00a4d6]/15" />
        <div className="absolute inset-y-0 right-0 left-[1429px] bg-[#00a4d6]/20" />
        <div className="absolute inset-0 bg-[linear-gradient(to_right,rgba(0,30,45,0.3)_0,transparent_25%,transparent_76%,rgba(0,30,45,0.18)_100%)]" />
        <Panel />
        <AppMenu />
        <FirefoxWindow />
        <CalcWindow />
        <FileWindow />
      </main>
      <div className="w-[15px] shrink-0 border-t border-[#9fb3b6] bg-[#282828]" />
    </div>
  );
}
